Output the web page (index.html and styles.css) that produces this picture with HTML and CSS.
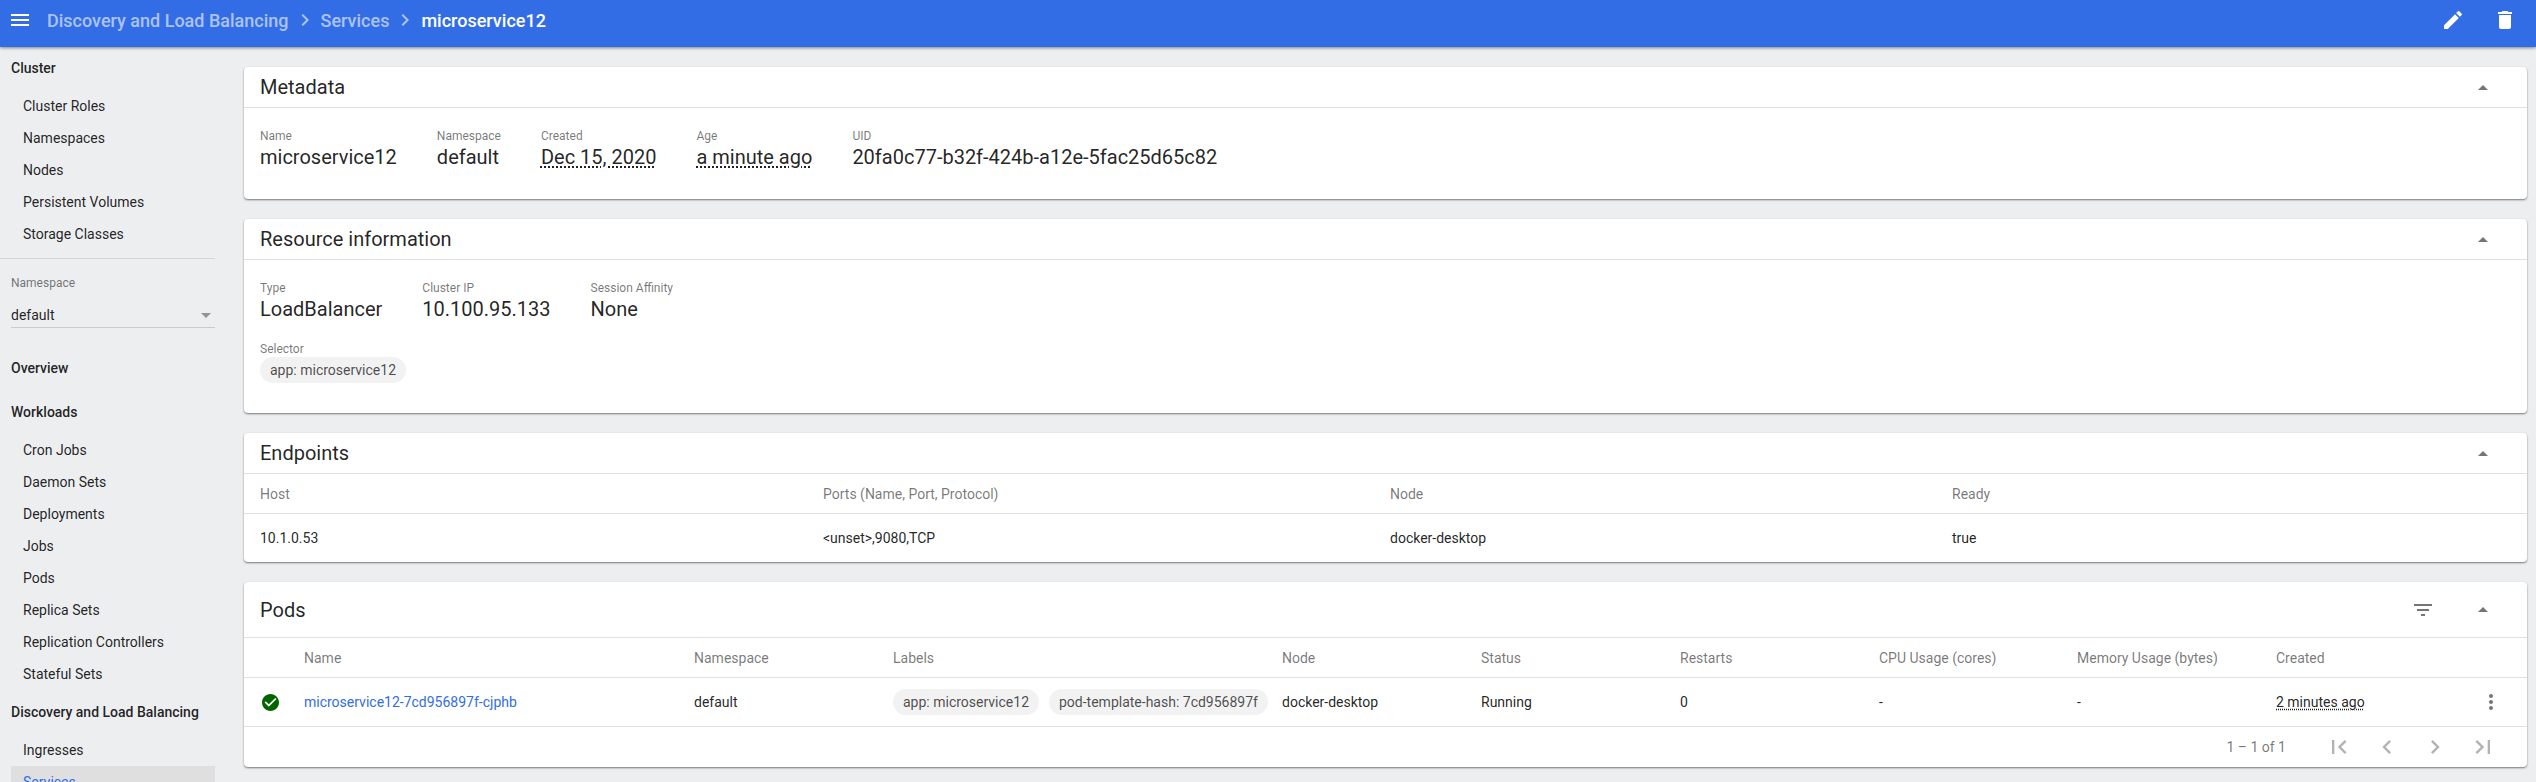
FILE: index.html
```html
<!DOCTYPE html>
<html>
<head>
	<title>microservice12 - Kubernetes Dashboard</title>
	<link rel="stylesheet" href="styles.css">
</head>
<body>
	<header class="toolbar">
		<svg class="menu-icon" viewBox="0 0 24 24"><path d="M3 18h18v-2H3v2zm0-5h18v-2H3v2zm0-7v2h18V6H3z"/></svg>
		<nav class="crumbs">
			<a>Discovery and Load Balancing</a>
			<svg class="crumb-sep" viewBox="0 0 24 24"><path d="M10 6L8.59 7.41 13.17 12l-4.58 4.59L10 18l6-6z"/></svg>
			<a>Services</a>
			<svg class="crumb-sep" viewBox="0 0 24 24"><path d="M10 6L8.59 7.41 13.17 12l-4.58 4.59L10 18l6-6z"/></svg>
			<span class="crumb-current">microservice12</span>
		</nav>
		<div class="toolbar-actions">
			<svg viewBox="0 0 24 24"><path d="M3 17.25V21h3.75L17.81 9.94l-3.75-3.75L3 17.25zM20.71 7.04a1 1 0 0 0 0-1.41l-2.34-2.34a1 1 0 0 0-1.41 0l-1.83 1.83 3.75 3.75 1.83-1.83z"/></svg>
			<svg viewBox="0 0 24 24"><path d="M6 19c0 1.1.9 2 2 2h8c1.1 0 2-.9 2-2V7H6v12zM19 4h-3.5l-1-1h-5l-1 1H5v2h14V4z"/></svg>
		</div>
	</header>

	<div class="page">
		<aside class="sidebar">
			<div class="nav-head first">Cluster</div>
			<a class="nav-item">Cluster Roles</a>
			<a class="nav-item">Namespaces</a>
			<a class="nav-item">Nodes</a>
			<a class="nav-item">Persistent Volumes</a>
			<a class="nav-item">Storage Classes</a>
			<div class="nav-rule"></div>
			<div class="ns-picker">
				<div class="ns-label">Namespace</div>
				<div class="ns-select"><span>default</span><i class="ns-arrow"></i></div>
			</div>
			<div class="nav-head overview">Overview</div>
			<div class="nav-head">Workloads</div>
			<a class="nav-item">Cron Jobs</a>
			<a class="nav-item">Daemon Sets</a>
			<a class="nav-item">Deployments</a>
			<a class="nav-item">Jobs</a>
			<a class="nav-item">Pods</a>
			<a class="nav-item">Replica Sets</a>
			<a class="nav-item">Replication Controllers</a>
			<a class="nav-item">Stateful Sets</a>
			<div class="nav-head">Discovery and Load Balancing</div>
			<a class="nav-item">Ingresses</a>
			<a class="nav-item active">Services</a>
		</aside>

		<main class="content">
			<section class="card">
				<div class="card-head">
					<h2>Metadata</h2>
					<i class="caret"></i>
				</div>
				<div class="props props-meta">
					<div class="prop"><div class="prop-label">Name</div><div class="prop-value">microservice12</div></div>
					<div class="prop"><div class="prop-label">Namespace</div><div class="prop-value">default</div></div>
					<div class="prop"><div class="prop-label">Created</div><div class="prop-value dotted">Dec 15, 2020</div></div>
					<div class="prop"><div class="prop-label">Age</div><div class="prop-value dotted">a minute ago</div></div>
					<div class="prop"><div class="prop-label">UID</div><div class="prop-value">20fa0c77-b32f-424b-a12e-5fac25d65c82</div></div>
				</div>
			</section>

			<section class="card">
				<div class="card-head">
					<h2>Resource information</h2>
					<i class="caret"></i>
				</div>
				<div class="props props-res">
					<div class="prop"><div class="prop-label">Type</div><div class="prop-value">LoadBalancer</div></div>
					<div class="prop"><div class="prop-label">Cluster IP</div><div class="prop-value">10.100.95.133</div></div>
					<div class="prop"><div class="prop-label">Session Affinity</div><div class="prop-value">None</div></div>
				</div>
				<div class="selector">
					<div class="prop-label">Selector</div>
					<span class="chip">app: microservice12</span>
				</div>
			</section>

			<section class="card">
				<div class="card-head">
					<h2>Endpoints</h2>
					<i class="caret"></i>
				</div>
				<div class="row head-row endpoints-grid">
					<div>Host</div>
					<div>Ports (Name, Port, Protocol)</div>
					<div>Node</div>
					<div>Ready</div>
				</div>
				<div class="row body-row endpoints-grid">
					<div>10.1.0.53</div>
					<div>&lt;unset&gt;,9080,TCP</div>
					<div>docker-desktop</div>
					<div>true</div>
				</div>
			</section>

			<section class="card">
				<div class="card-head tall">
					<h2>Pods</h2>
					<svg class="filter-icon" viewBox="0 0 24 24"><path d="M10 18h4v-2h-4v2zM3 6v2h18V6H3zm3 7h12v-2H6v2z"/></svg>
					<i class="caret"></i>
				</div>
				<div class="row head-row pods-grid">
					<div></div>
					<div>Name</div>
					<div>Namespace</div>
					<div>Labels</div>
					<div>Node</div>
					<div>Status</div>
					<div>Restarts</div>
					<div>CPU Usage (cores)</div>
					<div>Memory Usage (bytes)</div>
					<div>Created</div>
					<div></div>
				</div>
				<div class="row body-row pods-grid">
					<div class="status-cell">
						<svg class="status-ok" viewBox="2 2 20 20"><circle cx="12" cy="12" r="8" fill="#fff"/><path d="M12 2C6.48 2 2 6.48 2 12s4.48 10 10 10 10-4.48 10-10S17.52 2 12 2zm-2 15l-5-5 1.41-1.41L10 14.17l7.59-7.59L19 8l-9 9z"/></svg>
					</div>
					<div><a class="link">microservice12-7cd956897f-cjphb</a></div>
					<div>default</div>
					<div class="chips">
						<span class="chip">app: microservice12</span>
						<span class="chip">pod-template-hash: 7cd956897f</span>
					</div>
					<div>docker-desktop</div>
					<div>Running</div>
					<div>0</div>
					<div>-</div>
					<div>-</div>
					<div><span class="dotted">2 minutes ago</span></div>
					<div class="kebab-cell">
						<svg class="kebab" viewBox="0 0 24 24"><path d="M12 8c1.1 0 2-.9 2-2s-.9-2-2-2-2 .9-2 2 .9 2 2 2zm0 2c-1.1 0-2 .9-2 2s.9 2 2 2 2-.9 2-2-.9-2-2-2zm0 6c-1.1 0-2 .9-2 2s.9 2 2 2 2-.9 2-2-.9-2-2-2z"/></svg>
					</div>
				</div>
				<div class="pager">
					<span class="pager-range">1 – 1 of 1</span>
					<svg viewBox="0 0 24 24"><path d="M18.41 16.59L13.82 12l4.59-4.59L17 6l-6 6 6 6zM6 6h2v12H6z"/></svg>
					<svg viewBox="0 0 24 24"><path d="M15.41 7.41L14 6l-6 6 6 6 1.41-1.41L10.83 12z"/></svg>
					<svg viewBox="0 0 24 24"><path d="M10 6L8.59 7.41 13.17 12l-4.58 4.59L10 18l6-6z"/></svg>
					<svg viewBox="0 0 24 24"><path d="M5.59 7.41L10.18 12l-4.59 4.59L7 18l6-6-6-6zM16 6h2v12h-2z"/></svg>
				</div>
			</section>
		</main>
	</div>
</body>
</html>
```

FILE: styles.css
```css
html, body {
	height: 100%;
}

body {
	margin: 0;
	overflow: hidden;
	display: flex;
	flex-direction: column;
	background-color: #edeef0;
	color: rgba(0, 0, 0, 0.87);
	font-family: Roboto, "Liberation Sans", sans-serif;
	font-size: 14px;
}

/* top bar */
.toolbar {
	flex: none;
	height: 47px;
	box-sizing: border-box;
	padding: 0 12px 7px 8px;
	display: flex;
	align-items: center;
	background-color: #326de6;
	box-shadow: 0 1px 3px rgba(0, 0, 0, 0.45);
	position: relative;
	z-index: 2;
}

.menu-icon {
	width: 24px;
	height: 24px;
	fill: #fff;
}

.crumbs {
	margin-left: 15px;
	display: flex;
	align-items: center;
	font-size: 18px;
	font-weight: 500;
	color: rgba(255, 255, 255, 0.6);
}

.crumb-sep {
	width: 24px;
	height: 24px;
	margin: 0 4px;
	fill: rgba(255, 255, 255, 0.6);
}

.crumb-current {
	color: #fff;
}

.toolbar-actions {
	margin-left: auto;
	display: flex;
	gap: 28px;
	padding-right: 7px;
}

.toolbar-actions svg {
	width: 24px;
	height: 24px;
	fill: #fff;
}

.page {
	flex: 1;
	display: flex;
	min-height: 0;
}

/* left nav */
.sidebar {
	flex: none;
	width: 215px;
	margin-right: 21px;
	overflow: hidden;
}

.nav-head {
	height: 32px;
	margin-top: 6px;
	padding-left: 11px;
	line-height: 32px;
	font-weight: 500;
}

.nav-head.first {
	margin-top: 5px;
	margin-bottom: 6px;
}

.nav-head.overview {
	margin-top: 24px;
	margin-bottom: 12px;
}

.nav-item {
	display: block;
	height: 32px;
	margin-left: 11px;
	padding-left: 12px;
	line-height: 32px;
}

.nav-head + .nav-item {
	margin-top: 6px;
}

.nav-item.active {
	background-color: #dfdfdf;
	color: #326de6;
}

.nav-rule {
	height: 1px;
	margin-top: 8px;
	background-color: #d4d5d7;
}

.ns-picker {
	padding: 16px 0 0 11px;
}

.ns-label {
	font-size: 12px;
	line-height: 16px;
	color: rgba(0, 0, 0, 0.54);
}

.ns-select {
	height: 37px;
	box-sizing: border-box;
	padding-top: 12px;
	display: flex;
	justify-content: space-between;
	align-items: center;
	border-bottom: 1px solid #c9cacc;
}

.ns-arrow {
	width: 0;
	height: 0;
	margin-right: 4px;
	border-left: 5px solid transparent;
	border-right: 5px solid transparent;
	border-top: 5px solid rgba(0, 0, 0, 0.38);
}

/* cards */
.content {
	flex: 1;
	min-width: 0;
	padding: 20px 9px 0 8px;
	display: flex;
	flex-direction: column;
	gap: 20px;
	overflow: hidden;
}

.card {
	flex: none;
	background-color: #fff;
	border-radius: 4px;
	box-shadow: 0 1px 2px rgba(0, 0, 0, 0.5);
}

.card-head {
	height: 40px;
	padding: 0 39px 0 16px;
	display: flex;
	align-items: center;
	border-bottom: 1px solid #e0e0e0;
}

.card-head.tall {
	height: 55px;
}

.card-head h2 {
	margin: 0 auto 0 0;
	font-size: 20px;
	font-weight: 400;
}

.caret {
	width: 0;
	height: 0;
	border-left: 5px solid transparent;
	border-right: 5px solid transparent;
	border-bottom: 5px solid rgba(0, 0, 0, 0.54);
}

.filter-icon {
	width: 24px;
	height: 24px;
	margin-right: 43px;
	fill: rgba(0, 0, 0, 0.54);
}

.props {
	display: flex;
	gap: 40px;
	padding: 20px 16px 0;
}

.props-meta {
	height: 71px;
}

.prop-label {
	font-size: 12px;
	line-height: 16px;
	color: rgba(0, 0, 0, 0.54);
}

.prop-value {
	font-size: 20px;
	line-height: 26px;
}

.dotted {
	text-decoration: underline dotted;
	text-underline-offset: 2px;
}

.selector {
	padding: 19px 16px 30px;
}

.chip {
	display: inline-block;
	height: 26px;
	padding: 0 10px;
	border-radius: 13px;
	background-color: #f2f2f2;
	line-height: 26px;
	color: rgba(0, 0, 0, 0.7);
}

/* tables */
.row {
	display: grid;
	align-items: center;
	padding-left: 16px;
}

.head-row {
	height: 39px;
	border-bottom: 1px solid #e0e0e0;
	color: rgba(0, 0, 0, 0.54);
}

.body-row {
	height: 48px;
}

.endpoints-grid {
	grid-template-columns: 563px 567px 562px 1fr;
}

.pods-grid {
	grid-template-columns: 44px 390px 199px 389px 199px 199px 199px 198px 199px 199px 1fr;
}

.status-cell, .kebab-cell {
	display: flex;
	align-items: center;
}

.status-ok {
	width: 17px;
	height: 17px;
	margin-left: 2px;
	fill: #006400;
}

.link {
	color: #326de6;
}

.chips {
	display: flex;
	gap: 10px;
}

.kebab {
	width: 24px;
	height: 24px;
	margin-left: 4px;
	fill: rgba(0, 0, 0, 0.54);
}

.pager {
	height: 40px;
	padding-right: 30px;
	display: flex;
	justify-content: flex-end;
	align-items: center;
	gap: 20px;
	border-top: 1px solid #e0e0e0;
	color: rgba(0, 0, 0, 0.54);
}

.pager svg {
	width: 28px;
	height: 28px;
	fill: rgba(0, 0, 0, 0.3);
}

.pager-range {
	margin-right: 19px;
}
```
